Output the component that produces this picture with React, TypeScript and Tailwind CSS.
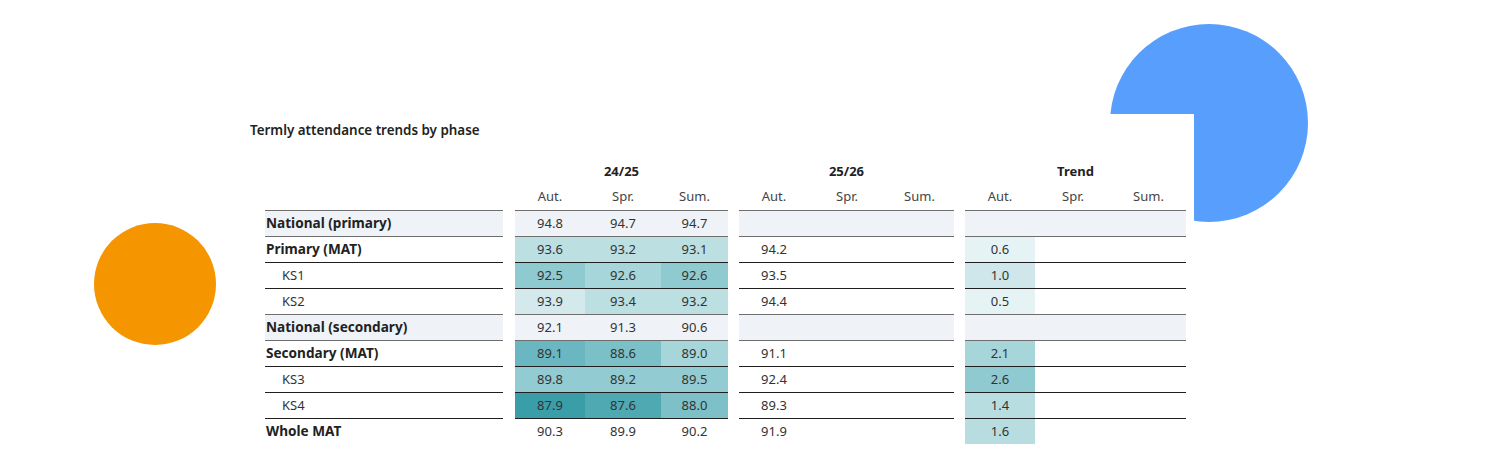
const font = { fontFamily: '"Noto Sans", Lato, sans-serif' }

type Row = {
  label: string
  kind: 'national' | 'group' | 'sub'
  a: [string, string, string]
  aBg: [string, string, string]
  b: string
  t: string
  tBg: string
}

const rows: Row[] = [
  { label: 'National (primary)', kind: 'national', a: ['94.8', '94.7', '94.7'], aBg: ['bg-[#eff3f8]', 'bg-[#eff3f8]', 'bg-[#eff3f8]'], b: '', t: '', tBg: '' },
  { label: 'Primary (MAT)', kind: 'group', a: ['93.6', '93.2', '93.1'], aBg: ['bg-[#bcdfe2]', 'bg-[#bcdfe2]', 'bg-[#bcdfe2]'], b: '94.2', t: '0.6', tBg: 'bg-[#e6f3f4]' },
  { label: 'KS1', kind: 'sub', a: ['92.5', '92.6', '92.6'], aBg: ['bg-[#8fcad1]', 'bg-[#a6d5da]', 'bg-[#8fcad1]'], b: '93.5', t: '1.0', tBg: 'bg-[#cfe7ea]' },
  { label: 'KS2', kind: 'sub', a: ['93.9', '93.4', '93.2'], aBg: ['bg-[#d3e9eb]', 'bg-[#bcdfe2]', 'bg-[#bcdfe2]'], b: '94.4', t: '0.5', tBg: 'bg-[#e6f3f4]' },
  { label: 'National (secondary)', kind: 'national', a: ['92.1', '91.3', '90.6'], aBg: ['bg-[#eff3f8]', 'bg-[#eff3f8]', 'bg-[#eff3f8]'], b: '', t: '', tBg: '' },
  { label: 'Secondary (MAT)', kind: 'group', a: ['89.1', '88.6', '89.0'], aBg: ['bg-[#6ab7c1]', 'bg-[#7bbfc7]', 'bg-[#a6d5da]'], b: '91.1', t: '2.1', tBg: 'bg-[#a6d5da]' },
  { label: 'KS3', kind: 'sub', a: ['89.8', '89.2', '89.5'], aBg: ['bg-[#93cbd2]', 'bg-[#93cbd2]', 'bg-[#93cbd2]'], b: '92.4', t: '2.6', tBg: 'bg-[#8fcad1]' },
  { label: 'KS4', kind: 'sub', a: ['87.9', '87.6', '88.0'], aBg: ['bg-[#3a9ea9]', 'bg-[#4fa9b3]', 'bg-[#7dc0c8]'], b: '89.3', t: '1.4', tBg: 'bg-[#b8dde1]' },
  { label: 'Whole MAT', kind: 'group', a: ['90.3', '89.9', '90.2'], aBg: ['', '', ''], b: '91.9', t: '1.6', tBg: 'bg-[#b8dde1]' },
]

const terms = ['Aut.', 'Spr.', 'Sum.']

function SubHead() {
  return (
    <div className="flex h-full">
      <div className="w-[70px] flex items-center justify-center">{terms[0]}</div>
      <div className="w-[76px] flex items-center justify-center">{terms[1]}</div>
      <div className="flex-1 flex items-center justify-center">{terms[2]}</div>
    </div>
  )
}

export default function App() {
  return (
    <div className="relative w-[1512px] h-[470px] overflow-hidden bg-white" style={font}>
      {/* decorative shapes */}
      <div className="absolute left-[94px] top-[223px] w-[122px] h-[122px] rounded-full bg-[#f59500]" />
      <div className="absolute left-[1110px] top-[24px] w-[198px] h-[198px] rounded-full bg-[#589ffd]" />

      <div className="relative z-10 ml-[236px] mt-[114px] w-[958px] h-[356px] bg-white pt-[8px] pl-[14px] text-[13px] text-[#333]">
        <div className="h-[16px] leading-[16px] text-[13.4px] font-semibold text-[#222]">Termly attendance trends by phase</div>

        <div className="ml-[15px] mt-[22px]">
          {/* group headers */}
          <div className="flex h-[24px] font-bold text-[#222]">
            <div className="w-[238px]" />
            <div className="ml-[12px] w-[213px] flex items-center justify-center">24/25</div>
            <div className="ml-[11px] w-[215px] flex items-center justify-center">25/26</div>
            <div className="ml-[11px] w-[221px] flex items-center justify-center">Trend</div>
          </div>
          <div className="flex h-[26px] text-[#444]">
            <div className="w-[238px]" />
            <div className="ml-[12px] w-[213px]"><SubHead /></div>
            <div className="ml-[11px] w-[215px]"><SubHead /></div>
            <div className="ml-[11px] w-[221px]"><SubHead /></div>
          </div>

          {rows.map((r, i) => {
            const prevNational = i > 0 && rows[i - 1].kind === 'national'
            const line = r.kind === 'national' || prevNational ? 'border-[#6e6e6e]' : 'border-[#1f1f1f]'
            const natBg = r.kind === 'national' ? 'bg-[#eff3f8]' : ''
            return (
              <div key={r.label} className="flex h-[26px]">
                <div
                  className={`w-[238px] border-t ${line} ${natBg} flex items-center ${r.kind === 'sub' ? 'pl-[17px]' : 'pl-[1px] text-[13.6px] font-bold text-[#222]'}`}
                >
                  {r.label}
                </div>
                <div className={`ml-[12px] w-[213px] border-t ${line} flex`}>
                  <div className={`w-[70px] flex items-center justify-center ${r.aBg[0]}`}>{r.a[0]}</div>
                  <div className={`w-[76px] flex items-center justify-center ${r.aBg[1]}`}>{r.a[1]}</div>
                  <div className={`flex-1 flex items-center justify-center ${r.aBg[2]}`}>{r.a[2]}</div>
                </div>
                <div className={`ml-[11px] w-[215px] border-t ${line} ${natBg} flex`}>
                  <div className="w-[70px] flex items-center justify-center">{r.b}</div>
                </div>
                <div className={`ml-[11px] w-[221px] border-t ${line} ${natBg} flex`}>
                  <div className={`w-[70px] flex items-center justify-center ${r.tBg}`}>{r.t}</div>
                </div>
              </div>
            )
          })}
        </div>
      </div>
    </div>
  )
}
